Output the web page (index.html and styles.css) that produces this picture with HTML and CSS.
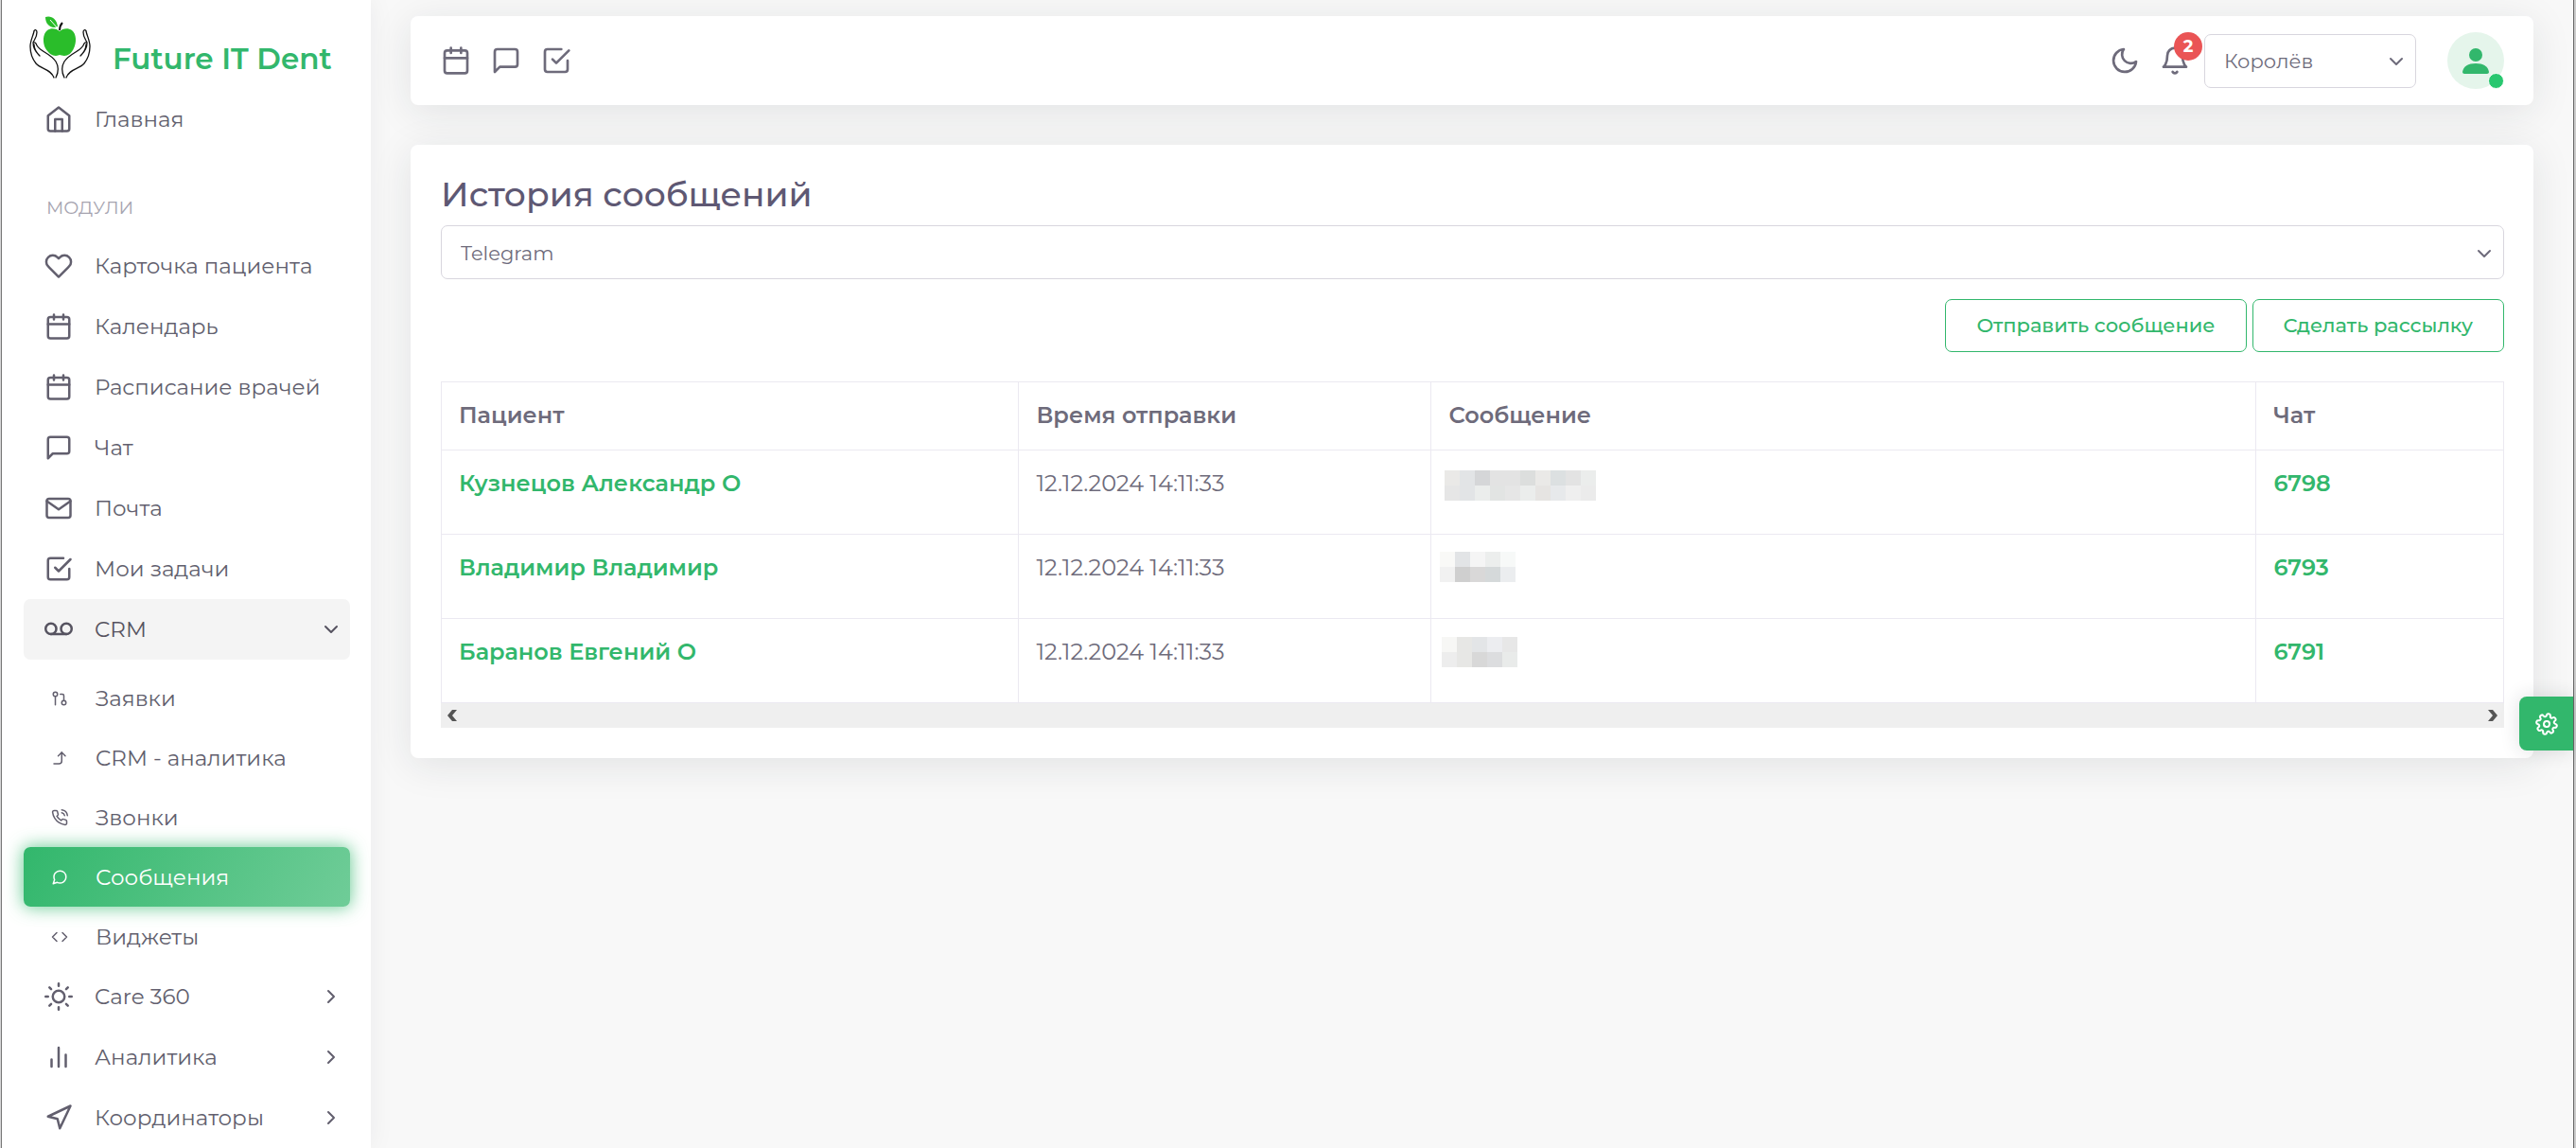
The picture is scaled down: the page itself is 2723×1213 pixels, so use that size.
FILE: index.html
```html
<!DOCTYPE html>
<html lang="ru">
<head>
<meta charset="utf-8">
<meta name="viewport" content="width=device-width, initial-scale=1">
<title>Future IT Dent — История сообщений</title>
<link rel="stylesheet" href="styles.css">
</head>
<body>
<svg class="sprite" aria-hidden="true">
  <symbol id="home" viewBox="0 0 24 24"><path d="M3 9l9-7 9 7v11a2 2 0 0 1-2 2H5a2 2 0 0 1-2-2z"/><path d="M9 22V12h6v10"/></symbol>
  <symbol id="heart" viewBox="0 0 24 24"><path d="M20.84 4.61a5.5 5.5 0 0 0-7.78 0L12 5.67l-1.06-1.06a5.5 5.5 0 0 0-7.78 7.78l1.06 1.06L12 21.23l7.78-7.78 1.06-1.06a5.5 5.5 0 0 0 0-7.78z"/></symbol>
  <symbol id="calendar" viewBox="0 0 24 24"><rect x="3" y="4" width="18" height="18" rx="2"/><path d="M16 2v4M8 2v4M3 10h18"/></symbol>
  <symbol id="chat" viewBox="0 0 24 24"><path d="M21 15a2 2 0 0 1-2 2H7l-4 4V5a2 2 0 0 1 2-2h14a2 2 0 0 1 2 2z"/></symbol>
  <symbol id="mail" viewBox="0 0 24 24"><path d="M4 4h16a2 2 0 0 1 2 2v12a2 2 0 0 1-2 2H4a2 2 0 0 1-2-2V6a2 2 0 0 1 2-2z"/><path d="M22 6l-10 7L2 6"/></symbol>
  <symbol id="check" viewBox="0 0 24 24"><path d="M9 11l3 3L22 4"/><path d="M21 12v7a2 2 0 0 1-2 2H5a2 2 0 0 1-2-2V5a2 2 0 0 1 2-2h11"/></symbol>
  <symbol id="voicemail" viewBox="0 0 24 24"><circle cx="5.5" cy="11.5" r="4.5"/><circle cx="18.5" cy="11.5" r="4.5"/><path d="M5.5 16h13"/></symbol>
  <symbol id="pull" viewBox="0 0 24 24"><circle cx="18" cy="18" r="3"/><circle cx="6" cy="6" r="3"/><path d="M13 6h3a2 2 0 0 1 2 2v7M6 9v12"/></symbol>
  <symbol id="corner" viewBox="0 0 24 24"><path d="M10 9l5-5 5 5"/><path d="M4 20h7a4 4 0 0 0 4-4V4"/></symbol>
  <symbol id="phone" viewBox="0 0 24 24"><path d="M15.05 5A5 5 0 0 1 19 8.95M15.05 1A9 9 0 0 1 23 8.94m-1 7.98v3a2 2 0 0 1-2.18 2 19.79 19.79 0 0 1-8.63-3.07 19.5 19.5 0 0 1-6-6 19.79 19.79 0 0 1-3.07-8.67A2 2 0 0 1 4.11 2h3a2 2 0 0 1 2 1.72 12.84 12.84 0 0 0 .7 2.81 2 2 0 0 1-.45 2.11L8.09 9.91a16 16 0 0 0 6 6l1.27-1.27a2 2 0 0 1 2.11-.45 12.84 12.84 0 0 0 2.81.7A2 2 0 0 1 22 16.92z"/></symbol>
  <symbol id="bubble" viewBox="0 0 24 24"><path d="M21 11.5a8.38 8.38 0 0 1-.9 3.8 8.5 8.5 0 0 1-7.6 4.7 8.38 8.38 0 0 1-3.8-.9L3 21l1.9-5.7a8.38 8.38 0 0 1-.9-3.8 8.5 8.5 0 0 1 4.7-7.6 8.38 8.38 0 0 1 3.8-.9h.5a8.48 8.48 0 0 1 8 8v.5z"/></symbol>
  <symbol id="code" viewBox="0 0 24 24"><path d="M16 18l6-6-6-6M8 6l-6 6 6 6"/></symbol>
  <symbol id="sun" viewBox="0 0 24 24"><circle cx="12" cy="12" r="5"/><path d="M12 1v2M12 21v2M4.22 4.22l1.42 1.42M18.36 18.36l1.42 1.42M1 12h2M21 12h2M4.22 19.78l1.42-1.42M18.36 5.64l1.42-1.42"/></symbol>
  <symbol id="bars" viewBox="0 0 24 24"><path d="M18 20V10M12 20V4M6 20v-6"/></symbol>
  <symbol id="nav" viewBox="0 0 24 24"><path d="M3 11l19-9-9 19-2-8z"/></symbol>
  <symbol id="moon" viewBox="0 0 24 24"><path d="M21 12.79A9 9 0 1 1 11.21 3 7 7 0 0 0 21 12.79z"/></symbol>
  <symbol id="bell" viewBox="0 0 24 24"><path d="M18 8A6 6 0 0 0 6 8c0 7-3 9-3 9h18s-3-2-3-9M13.73 21a2 2 0 0 1-3.46 0"/></symbol>
  <symbol id="down" viewBox="0 0 24 24"><path d="M6 9l6 6 6-6"/></symbol>
  <symbol id="right" viewBox="0 0 24 24"><path d="M9 18l6-6-6-6"/></symbol>
  <symbol id="gear" viewBox="0 0 24 24"><g transform="rotate(12 12 12)"><circle cx="12" cy="12" r="3"/><path d="M19.4 15a1.65 1.65 0 0 0 .33 1.82l.06.06a2 2 0 0 1-2.83 2.83l-.06-.06a1.65 1.65 0 0 0-1.82-.33 1.65 1.65 0 0 0-1 1.51V21a2 2 0 0 1-4 0v-.09A1.65 1.65 0 0 0 9 19.4a1.65 1.65 0 0 0-1.82.33l-.06.06a2 2 0 0 1-2.83-2.83l.06-.06a1.65 1.65 0 0 0 .33-1.82 1.65 1.65 0 0 0-1.51-1H3a2 2 0 0 1 0-4h.09A1.65 1.65 0 0 0 4.6 9a1.65 1.65 0 0 0-.33-1.82l-.06-.06a2 2 0 0 1 2.83-2.83l.06.06a1.65 1.65 0 0 0 1.82.33H9a1.65 1.65 0 0 0 1-1.51V3a2 2 0 0 1 4 0v.09a1.65 1.65 0 0 0 1 1.51 1.65 1.65 0 0 0 1.82-.33l.06-.06a2 2 0 0 1 2.83 2.83l-.06.06a1.65 1.65 0 0 0-.33 1.82V9a1.65 1.65 0 0 0 1.51 1H21a2 2 0 0 1 0 4h-.09a1.65 1.65 0 0 0-1.51 1z"/></g></symbol>
</svg>

<div class="app">
  <aside class="sidebar">
    <a class="brand" href="#">
      <svg class="brand-logo" viewBox="0 0 65 66" aria-hidden="true">
        <path fill="#2abd2a" d="M32 16c-3-3-9-4-13-1-5 4-5 13-2 19 3 5 7 8 11 8 2 0 3-1 4-1s3 1 5 1c4 0 8-3 10-8 3-6 3-15-2-19-4-3-10-2-13 1z"/>
        <path fill="#2abd2a" d="M17 1c6-2 12 2 13 10-7 3-13-2-13-10z"/>
        <path fill="none" stroke="#fff" d="M22 4l8 9"/>
        <path fill="none" stroke="#111" stroke-width="2" d="M32 15c0-3 1-6 3-8"/>
        <g fill="none" stroke="#111" stroke-width="1.3" stroke-linecap="round" stroke-linejoin="round">
          <path id="hand" d="M10 41C6 37 4 33 4 28c1-3 4-5 4-11 0-3-3-3-3-1-1 5-4 10-4 16 0 8 2 13 6 18 5 6 16 6 19 15M4 28c1-1 3 0 4 3 4 7 14 8 20 17 3 5 3 11 0 17M5 30c0 5 2 8 6 12"/>
          <use href="#hand" transform="matrix(-1 0 0 1 65 0)"/>
        </g>
      </svg>
      <span>Future IT Dent</span>
    </a>
    <nav>
      <ul class="menu">
        <li><a class="item" href="#"><svg class="icon"><use href="#home"/></svg><span>Главная</span></a></li>
        <li class="section">МОДУЛИ</li>
        <li><a class="item" href="#"><svg class="icon"><use href="#heart"/></svg><span>Карточка пациента</span></a></li>
        <li><a class="item" href="#"><svg class="icon"><use href="#calendar"/></svg><span>Календарь</span></a></li>
        <li><a class="item" href="#"><svg class="icon"><use href="#calendar"/></svg><span>Расписание врачей</span></a></li>
        <li><a class="item" href="#"><svg class="icon"><use href="#chat"/></svg><span>Чат</span></a></li>
        <li><a class="item" href="#"><svg class="icon"><use href="#mail"/></svg><span>Почта</span></a></li>
        <li><a class="item" href="#"><svg class="icon"><use href="#check"/></svg><span>Мои задачи</span></a></li>
        <li>
          <a class="item open" href="#"><svg class="icon"><use href="#voicemail"/></svg><span>CRM</span><svg class="chevron"><use href="#down"/></svg></a>
          <ul class="submenu">
            <li><a class="item sub" href="#"><svg class="icon"><use href="#pull"/></svg><span>Заявки</span></a></li>
            <li><a class="item sub" href="#"><svg class="icon"><use href="#corner"/></svg><span>CRM - аналитика</span></a></li>
            <li><a class="item sub" href="#"><svg class="icon"><use href="#phone"/></svg><span>Звонки</span></a></li>
            <li><a class="item sub active" href="#" aria-current="page"><svg class="icon"><use href="#bubble"/></svg><span>Сообщения</span></a></li>
            <li><a class="item sub" href="#"><svg class="icon"><use href="#code"/></svg><span>Виджеты</span></a></li>
          </ul>
        </li>
        <li><a class="item" href="#"><svg class="icon"><use href="#sun"/></svg><span>Care 360</span><svg class="chevron"><use href="#right"/></svg></a></li>
        <li><a class="item" href="#"><svg class="icon"><use href="#bars"/></svg><span>Аналитика</span><svg class="chevron"><use href="#right"/></svg></a></li>
        <li><a class="item" href="#"><svg class="icon"><use href="#nav"/></svg><span>Координаторы</span><svg class="chevron"><use href="#right"/></svg></a></li>
      </ul>
    </nav>
  </aside>

  <div class="content">
    <header class="panel topbar">
      <div class="shortcuts">
        <a href="#" aria-label="Календарь"><svg class="icon"><use href="#calendar"/></svg></a>
        <a href="#" aria-label="Чат"><svg class="icon"><use href="#chat"/></svg></a>
        <a href="#" aria-label="Мои задачи"><svg class="icon"><use href="#check"/></svg></a>
      </div>
      <div class="tools">
        <button class="tool" type="button" aria-label="Тёмная тема"><svg class="icon"><use href="#moon"/></svg></button>
        <button class="tool" type="button" aria-label="Уведомления"><svg class="icon"><use href="#bell"/></svg><span class="badge">2</span></button>
        <div class="select clinic">
          <select aria-label="Филиал"><option>Королёв</option></select>
          <svg class="chevron"><use href="#down"/></svg>
        </div>
        <a class="avatar" href="#" aria-label="Профиль">
          <svg viewBox="0 0 60 60"><circle cx="30" cy="24" r="7"/><path d="M18 44c-1 0-2-1-2-2 1-6 6-9 14-9s13 3 14 9c0 1-1 2-2 2z"/></svg>
          <span class="status"></span>
        </a>
      </div>
    </header>

    <main class="panel card">
      <h1>История сообщений</h1>
      <div class="select">
        <select aria-label="Канал"><option>Telegram</option></select>
        <svg class="chevron"><use href="#down"/></svg>
      </div>
      <div class="actions">
        <button class="btn" type="button">Отправить сообщение</button>
        <button class="btn" type="button">Сделать рассылку</button>
      </div>
      <table>
        <colgroup><col class="c-patient"><col class="c-time"><col class="c-message"><col class="c-chat"></colgroup>
        <thead>
          <tr><th>Пациент</th><th>Время отправки</th><th>Сообщение</th><th>Чат</th></tr>
        </thead>
        <tbody>
          <tr>
            <td><a href="#">Кузнецов Александр О</a></td><td>12.12.2024 14:11:33</td>
            <td class="message"><svg class="mosaic" viewBox="0 0 176 40" shape-rendering="crispEdges" role="img" aria-label="Скрытый текст"><g transform="translate(5 4)">
              <path fill="#eae9e7" d="M0 0h16v16H0zM96 0h16v16H96z"/><path fill="#e2e4e6" d="M16 0h16v32H16z"/><path fill="#d5d6d8" d="M32 0h16v16H32z"/><path fill="#e3e3e3" d="M48 0h32v16H48zM128 0h16v16h-16z"/><path fill="#dcdedd" d="M80 0h16v16H80z"/><path fill="#dce0e1" d="M112 0h16v16h-16z"/><path fill="#ebedec" d="M144 0h16v16h-16zM32 16h16v16H32zM80 16h16v16H80z"/><path fill="#e6e6e6" d="M0 16h16v16H0zM64 16h16v16H64z"/><path fill="#e2e4e3" d="M48 16h16v16H48z"/><path fill="#e6e4e2" d="M96 16h16v16H96z"/><path fill="#e7e9eb" d="M112 16h16v16h-16z"/><path fill="#efefef" d="M128 16h16v16h-16z"/><path fill="#ebebeb" d="M144 16h16v16h-16z"/></g></svg></td>
            <td><a href="#">6798</a></td>
          </tr>
          <tr>
            <td><a href="#">Владимир Владимир</a></td><td>12.12.2024 14:11:33</td>
            <td class="message"><svg class="mosaic" viewBox="0 0 176 40" shape-rendering="crispEdges" role="img" aria-label="Скрытый текст"><g transform="translate(0 1)">
              <path fill="#f9f9f7" d="M0 0h16v16H0z"/><path fill="#e2e4e6" d="M16 0h16v16H16z"/><path fill="#f5f5f5" d="M32 0h16v16H32z"/><path fill="#eceeed" d="M48 0h16v16H48z"/><path fill="#f7f9f8" d="M64 0h16v16H64z"/><path fill="#f1f1f1" d="M0 16h16v16H0z"/><path fill="#cfcfcf" d="M16 16h16v16H16z"/><path fill="#d9d8d8" d="M32 16h16v16H32z"/><path fill="#d5d9da" d="M48 16h16v16H48z"/><path fill="#ebedef" d="M64 16h16v16H64z"/></g></svg></td>
            <td><a href="#">6793</a></td>
          </tr>
          <tr>
            <td><a href="#">Баранов Евгений О</a></td><td>12.12.2024 14:11:33</td>
            <td class="message"><svg class="mosaic" viewBox="0 0 176 40" shape-rendering="crispEdges" role="img" aria-label="Скрытый текст"><g transform="translate(2 2)">
              <path fill="#f7f7f5" d="M0 0h16v16H0z"/><path fill="#e7e7e5" d="M16 0h16v32H16z"/><path fill="#e3e5e7" d="M32 0h16v16H32z"/><path fill="#ecedf0" d="M48 0h16v16H48z"/><path fill="#e7e7e7" d="M64 0h16v16H64z"/><path fill="#ededed" d="M0 16h16v16H0z"/><path fill="#d8d8d8" d="M32 16h16v16H32z"/><path fill="#dcdddf" d="M48 16h16v16H48z"/><path fill="#e9ebea" d="M64 16h16v16H64z"/></g></svg></td>
            <td><a href="#">6791</a></td>
          </tr>
        </tbody>
      </table>
      <div class="scrollbar" aria-hidden="true">
        <svg viewBox="0 0 10 12"><path d="M5 0h5L5 6l5 6H5L0 6z"/></svg>
        <svg viewBox="0 0 10 12"><path d="M0 0h5l5 6-5 6H0l5-6z"/></svg>
      </div>
    </main>
  </div>
</div>
<button class="customizer" type="button" aria-label="Настройки"><svg class="icon"><use href="#gear"/></svg></button>
</body>
</html>
```
FILE: styles.css
```css
:root {
  --green: #32b76c;
  --text: #6e6b7b;
  --menu-text: #625f6e;
  --heading: #5e5873;
  --field-border: #d8d6de;
  --table-border: #ebe9f1;
}

* { box-sizing: border-box; }

body {
  margin: 0;
  background: #f8f8f8;
  color: var(--text);
  font-family: Montserrat, Inter, sans-serif;
  font-size: 21px;
  line-height: 32px;
}

a { color: inherit; text-decoration: none; }
ul { margin: 0; padding: 0; list-style: none; }
button, select { font: inherit; color: inherit; }

.sprite { position: absolute; width: 0; height: 0; }

.icon, .chevron {
  flex: none;
  display: block;
  width: 32px;
  height: 32px;
  fill: none;
  stroke: currentColor;
  stroke-width: 2;
  stroke-linecap: round;
  stroke-linejoin: round;
}
.chevron { width: 24px; height: 24px; }

.app {
  display: flex;
  min-height: 100vh;
  border-left: 1px solid #ddd;
  border-right: 2px solid #ccc;
}

/* Sidebar */
.sidebar {
  flex: none;
  width: 391px;
  background: #fff;
  border-left: 1px solid #777;
  box-shadow: 0 0 26px rgba(34, 41, 47, .06);
  color: var(--menu-text);
}
.brand {
  display: flex;
  align-items: center;
  gap: 23px;
  height: 94px;
  padding: 6px 0 0 29px;
  color: var(--green);
  font-size: 31px;
  font-weight: 600;
}
.brand-logo { flex: none; width: 65px; height: 66px; }
.brand span { padding-top: 24px; }

.menu { padding: 0 22px 0 23px; font-size: 23px; }
.item {
  display: flex;
  align-items: center;
  gap: 23px;
  height: 64px;
  padding: 0 8px 0 22px;
  border-radius: 7px;
}
.item span { flex: 1; }
.menu .icon { width: 30px; height: 30px; }
.section {
  padding: 46px 24px 14px;
  color: #a6a4b0;
  font-size: 19px;
  line-height: 31px;
}
.open { background: #f4f4f4; color: #565360; }
.submenu { padding-top: 9px; }
.sub { height: 63px; padding-left: 29px; gap: 29px; }
.menu .sub .icon { width: 18px; height: 18px; }
.active {
  background: linear-gradient(118deg, var(--green), rgba(50, 183, 108, .7));
  box-shadow: 0 0 18px 1px rgba(50, 183, 108, .7);
  color: #fff;
}

/* Main column */
.content {
  flex: 1;
  min-width: 0;
  padding: 17px 42px 42px 42px;
  border-right: 1px solid #666;
}
.panel {
  padding: 0 31px 0 32px;
  background: #fff;
  border-radius: 8px;
  box-shadow: 0 7px 42px rgba(34, 41, 47, .1);
}
.topbar {
  display: flex;
  align-items: center;
  justify-content: space-between;
  height: 94px;
  margin-bottom: 42px;
}
.shortcuts { display: flex; gap: 21px; }
.tools { display: flex; align-items: center; }
.tool {
  position: relative;
  margin-right: 21px;
  padding: 0;
  border: 0;
  background: none;
}
.tool + .tool { margin-right: 15px; }
.badge {
  position: absolute;
  top: -14px;
  right: -13px;
  width: 30px;
  height: 30px;
  border-radius: 50%;
  background: #ea5455;
  color: #fff;
  font-size: 18px;
  font-weight: 700;
  line-height: 30px;
  text-align: center;
}

.select { display: grid; align-items: center; }
.select > * { grid-area: 1 / 1; }
.select select {
  appearance: none;
  width: 100%;
  height: 57px;
  padding: 2px 54px 0 20px;
  border: 1px solid var(--field-border);
  border-radius: 7px;
  background: #fff;
}
.select .chevron { justify-self: end; margin: 2px 9px 0 0; pointer-events: none; }
.clinic { width: 224px; margin-right: 33px; }

.avatar {
  position: relative;
  width: 60px;
  height: 60px;
  border-radius: 50%;
  background: #e5f5eb;
}
.avatar svg { display: block; fill: var(--green); }
.status {
  position: absolute;
  right: 0;
  bottom: 0;
  width: 17px;
  height: 17px;
  border: 1px solid #fff;
  border-radius: 50%;
  background: #28c76f;
}

/* Message history */
.card { padding-top: 30px; padding-bottom: 32px; }
h1 {
  margin: 0 0 11px;
  color: var(--heading);
  font-size: 36px;
  font-weight: 500;
  line-height: 44px;
}
.actions {
  display: flex;
  justify-content: flex-end;
  gap: 6px;
  margin: 21px 0 31px;
}
.btn {
  height: 56px;
  padding: 0 32px;
  border: 1px solid var(--green);
  border-radius: 7px;
  background: none;
  color: var(--green);
  font-weight: 500;
}

table { width: 100%; border-collapse: collapse; table-layout: fixed; font-size: 24px; }
.c-patient { width: 28%; }
.c-time { width: 20%; }
.c-message { width: 40%; }
.c-chat { width: 12%; }
th, td {
  padding: 19px 18px;
  border: 1px solid var(--table-border);
  text-align: left;
  vertical-align: top;
  font-weight: 400;
}
th { height: 72px; font-weight: 600; }
td { height: 89px; }
td a { color: var(--green); font-weight: 600; }
.message { padding: 17px 9px 0; }
.mosaic { display: block; width: 176px; height: 40px; }

.scrollbar {
  display: flex;
  align-items: center;
  justify-content: space-between;
  height: 26px;
  padding: 0 7px;
  background: #efefef;
}
.scrollbar svg { width: 10px; height: 12px; fill: #555; }

/* Settings tab pinned to the window edge */
.customizer {
  position: fixed;
  top: 736px;
  right: 3px;
  display: grid;
  place-items: center;
  width: 57px;
  height: 57px;
  padding: 0;
  border: 0;
  border-radius: 8px 0 0 8px;
  background: var(--green);
  box-shadow: 0 0 20px rgba(34, 41, 47, .15);
  color: #fff;
}
.customizer .icon { width: 24px; height: 24px; }
```
